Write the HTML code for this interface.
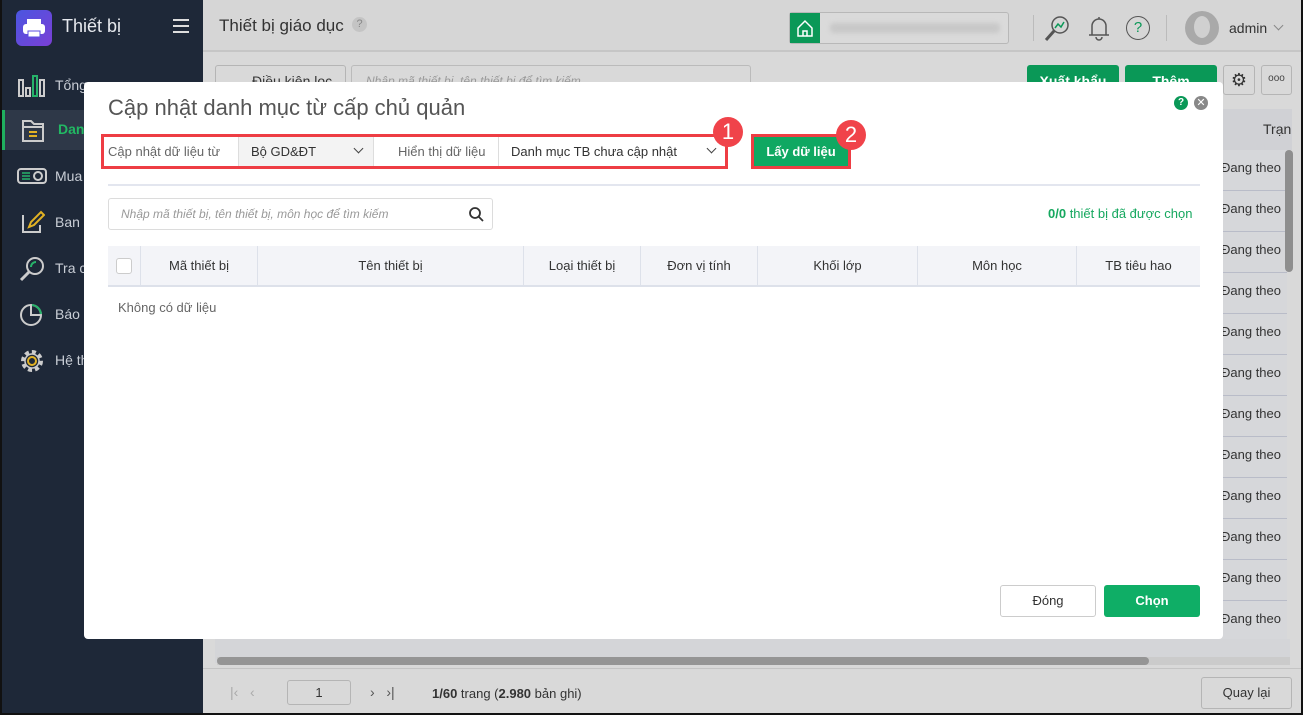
<!DOCTYPE html>
<html><head><meta charset="utf-8"><style>
*{box-sizing:border-box;margin:0;padding:0}
body{width:1303px;height:715px;position:relative;overflow:hidden;font-family:"Liberation Sans",sans-serif;background:#d9d9d9;color:#333;font-size:13px}
.abs{position:absolute}
#side{left:0;top:0;width:203px;height:715px;background:#1e2838;border-left:2px solid #111}
.nav{position:absolute;left:0;width:203px;height:40px;color:#c9ced6;font-size:14px}
.nav span{position:absolute;left:53px;top:11px}
.hdr{left:203px;top:0;width:1100px;height:52px;background:#d6d6d6;border-bottom:2px solid #c6c6c6}
.dang{position:absolute;left:1221px;font-size:13px;color:#333;width:68px;overflow:hidden;white-space:nowrap}
.rowl{position:absolute;left:1207px;width:80px;height:1px;background:#b9bcc8}
#modal{left:84px;top:82px;width:1139px;height:557px;background:#fff;border-radius:4px}
.th{position:absolute;top:0;height:40px;line-height:40px;text-align:center;font-size:13px;color:#333;border-right:1px solid #dde1ea}
.btn{position:absolute;border-radius:3px;text-align:center;font-size:13px}
.badge{position:absolute;width:30px;height:30px;border-radius:50%;background:#f0434a;color:#fff;font-size:22px;text-align:center;line-height:30px}
</style></head><body>
<div style="position:absolute;left:0;top:0;width:1303px;height:2px;background:#111"></div>
<div id="side" class="abs">
 <div class="abs" style="left:14px;top:10px;width:36px;height:36px;border-radius:6px;background:linear-gradient(135deg,#4a56e0,#7b3fd6)">
  <svg width="36" height="36" viewBox="0 0 36 36"><rect x="11" y="9" width="14" height="5" fill="#fff"/><rect x="7" y="14" width="22" height="10" rx="3" fill="#fff"/><rect x="12" y="21" width="12" height="6" fill="#fff" stroke="#5a4ee0"/></svg></div>
 <div class="abs" style="left:60px;top:16px;color:#e6e9ee;font-size:18px">Thiết bị</div>
 <div class="abs" style="left:171px;top:19px;width:16px;height:2px;background:#ddd;box-shadow:0 6px 0 #ddd,0 12px 0 #ddd"></div>
 <div class="nav" style="top:66px"><svg class="abs" style="left:15px;top:8px" width="28" height="24"><g fill="none" stroke="#ccc" stroke-width="2"><rect x="2" y="6" width="4" height="16"/><rect x="9" y="14" width="4" height="8"/><rect x="23" y="6" width="4" height="16"/></g><rect x="16" y="2" width="4" height="20" fill="none" stroke="#27b36a" stroke-width="2"/></svg><span>Tổng</span></div>
 <div class="nav" style="top:110px;background:#2e3848;border-left:3px solid #1fb05e"><svg class="abs" style="left:15px;top:8px" width="26" height="26"><path d="M3 3h8l3 3h9v17H3z M3 9h20" fill="none" stroke="#ccc" stroke-width="2"/><path d="M9 14h8M9 18h8" stroke="#e2b224" stroke-width="2"/></svg><span style="color:#22b863;font-weight:bold">Danh</span></div>
 <div class="nav" style="top:157px"><svg class="abs" style="left:15px;top:10px" width="30" height="20"><rect x="1" y="2" width="28" height="14" rx="3" fill="none" stroke="#ccc" stroke-width="2"/><circle cx="21" cy="9" r="4" fill="none" stroke="#ccc" stroke-width="2"/><path d="M5 6h8M5 9h8M5 12h8" stroke="#27b36a" stroke-width="1.5"/></svg><span>Mua</span></div>
 <div class="nav" style="top:203px"><svg class="abs" style="left:17px;top:6px" width="26" height="26"><path d="M4 6v17h17v-7" fill="none" stroke="#ccc" stroke-width="2"/><path d="M10 18l2-5 10-10 3 3-10 10z" fill="none" stroke="#e2b224" stroke-width="2"/></svg><span>Ban h</span></div>
 <div class="nav" style="top:249px"><svg class="abs" style="left:17px;top:6px" width="28" height="28"><circle cx="16" cy="11" r="8" fill="none" stroke="#ccc" stroke-width="2"/><path d="M10 17l-8 8" stroke="#ccc" stroke-width="3"/><path d="M12 12a5 5 0 0 1 5-5" fill="none" stroke="#27b36a" stroke-width="2"/></svg><span>Tra c</span></div>
 <div class="nav" style="top:295px"><svg class="abs" style="left:17px;top:6px" width="26" height="26"><circle cx="12" cy="14" r="10" fill="none" stroke="#ccc" stroke-width="2"/><path d="M12 4v10h10" fill="none" stroke="#ccc" stroke-width="2"/><path d="M13 4a10 10 0 0 1 9 9" fill="none" stroke="#27b36a" stroke-width="2"/></svg><span>Báo c</span></div>
 <div class="nav" style="top:341px"><svg class="abs" style="left:17px;top:6px" width="28" height="28"><circle cx="13" cy="14" r="9" fill="none" stroke="#ccc" stroke-width="4" stroke-dasharray="4 3"/><circle cx="13" cy="14" r="7" fill="none" stroke="#ccc" stroke-width="1.5"/><circle cx="13" cy="14" r="4" fill="none" stroke="#e2b224" stroke-width="2"/></svg><span>Hệ th</span></div>
</div>
<div class="abs hdr"></div>
<div class="abs" style="left:219px;top:16px;font-size:17px;color:#333">Thiết bị giáo dục</div>
<div class="abs" style="left:352px;top:17px;width:15px;height:15px;border-radius:50%;background:#c4c4c4;color:#888;font-size:11px;text-align:center;line-height:15px">?</div>
<div class="abs" style="left:789px;top:12px;width:220px;height:32px;border:1px solid #b8b8b8;border-radius:3px;background:#dadada"></div>
<div class="abs" style="left:790px;top:13px;width:30px;height:30px;background:#0a9857"><svg width="30" height="30"><path d="M8 15l7-7 7 7v8H8z M13 23v-5h4v5" fill="none" stroke="#fff" stroke-width="1.5"/></svg></div>
<div class="abs" style="left:830px;top:23px;width:170px;height:10px;background:#c8c8c8;border-radius:4px;filter:blur(2px)"></div>
<div class="abs" style="left:1033px;top:15px;width:1px;height:26px;background:#bbb"></div>
<svg class="abs" style="left:1043px;top:14px" width="30" height="30"><circle cx="17" cy="11" r="8" fill="none" stroke="#555" stroke-width="1.5"/><path d="M11 17l-8 9" stroke="#555" stroke-width="3"/><path d="M12 14l3-4 3 3 3-5" fill="none" stroke="#0a9857" stroke-width="1.5"/></svg>
<svg class="abs" style="left:1086px;top:13px" width="26" height="30"><path d="M13 4v2M6 22v-9a7 7 0 0 1 14 0v9h3H3z M10 24a3 3 0 0 0 6 0" fill="none" stroke="#555" stroke-width="1.5"/></svg>
<div class="abs" style="left:1126px;top:16px;width:24px;height:24px;border-radius:50%;border:1.5px solid #555;text-align:center;line-height:21px;color:#0a9857;font-size:15px">?</div>
<div class="abs" style="left:1166px;top:15px;width:1px;height:26px;background:#bbb"></div>
<div class="abs" style="left:1185px;top:11px;width:34px;height:34px;border-radius:50%;background:#a9a9a9;overflow:hidden"><div style="position:absolute;left:9px;top:5px;width:16px;height:22px;border-radius:50%;background:#d0d0d0"></div></div>
<div class="abs" style="left:1229px;top:20px;font-size:14px;color:#333">admin</div>
<div class="abs" style="left:1275px;top:22px;width:7px;height:7px;border-right:1px solid #888;border-bottom:1px solid #888;transform:rotate(45deg)"></div>
<!-- toolbar behind -->
<div class="abs" style="left:215px;top:65px;width:131px;height:30px;border:1px solid #b5b5b5;border-radius:3px;font-size:14px;padding:7px 0 0 36px;color:#333">Điều kiện lọc</div>
<div class="abs" style="left:351px;top:65px;width:400px;height:30px;border:1px solid #bbb;border-radius:3px;font-size:12px;font-style:italic;color:#999;padding:8px 0 0 14px">Nhập mã thiết bị, tên thiết bị để tìm kiếm</div>
<div class="abs" style="left:1027px;top:65px;width:92px;height:30px;background:#0a9857;border-radius:3px;color:#fff;font-weight:bold;font-size:14px;text-align:center;padding-top:8px">Xuất khẩu</div>
<div class="abs" style="left:1125px;top:65px;width:92px;height:30px;background:#0a9857;border-radius:3px;color:#fff;font-weight:bold;font-size:14px;text-align:center;padding-top:8px">Thêm</div>
<div class="abs" style="left:1223px;top:65px;width:32px;height:30px;border:1px solid #b5b5b5;border-radius:3px;text-align:center;line-height:28px;font-size:18px;color:#333">⚙</div>
<div class="abs" style="left:1261px;top:65px;width:31px;height:30px;border:1px solid #b5b5b5;border-radius:3px;text-align:center;line-height:26px;font-size:10px;color:#444">ooo</div>
<div class="abs" style="left:1207px;top:109px;width:85px;height:41px;background:#d0d1d5"></div>
<div class="abs" style="left:1263px;top:121px;font-size:14px">Trạn</div>
<div class="abs" style="left:1207px;top:150px;width:80px;height:495px;background:#d6d7da"></div>
<div class="dang" style="top:160px">Đang theo</div><div class="rowl" style="top:190px"></div>
<div class="dang" style="top:201px">Đang theo</div><div class="rowl" style="top:231px"></div>
<div class="dang" style="top:242px">Đang theo</div><div class="rowl" style="top:272px"></div>
<div class="dang" style="top:283px">Đang theo</div><div class="rowl" style="top:313px"></div>
<div class="dang" style="top:324px">Đang theo</div><div class="rowl" style="top:354px"></div>
<div class="dang" style="top:365px">Đang theo</div><div class="rowl" style="top:395px"></div>
<div class="dang" style="top:406px">Đang theo</div><div class="rowl" style="top:436px"></div>
<div class="dang" style="top:447px">Đang theo</div><div class="rowl" style="top:477px"></div>
<div class="dang" style="top:488px">Đang theo</div><div class="rowl" style="top:518px"></div>
<div class="dang" style="top:529px">Đang theo</div><div class="rowl" style="top:559px"></div>
<div class="dang" style="top:570px">Đang theo</div><div class="rowl" style="top:600px"></div>
<div class="dang" style="top:611px">Đang theo</div>
<div class="abs" style="left:1285px;top:150px;width:8px;height:122px;background:#8e8e8e;border-radius:4px"></div>
<div class="abs" style="left:215px;top:639px;width:1075px;height:24px;background:#d4d5d8"></div>
<div class="abs" style="left:217px;top:657px;width:1073px;height:8px;background:#cbcbcb"></div>
<div class="abs" style="left:217px;top:657px;width:932px;height:8px;background:#959595;border-radius:4px"></div>
<div class="abs" style="left:203px;top:668px;width:1100px;height:1px;background:#c4c4c4"></div>
<div class="abs" style="left:230px;top:684px;color:#aaa;font-size:14px">|‹ &nbsp; ‹</div>
<div class="abs" style="left:287px;top:680px;width:64px;height:25px;border:1px solid #b5b5b5;border-radius:3px;text-align:center;line-height:23px">1</div>
<div class="abs" style="left:370px;top:684px;color:#555;font-size:14px">› &nbsp; ›|</div>
<div class="abs" style="left:432px;top:686px"><b>1/60</b> trang (<b>2.980</b> bản ghi)</div>
<div class="abs" style="left:1201px;top:677px;width:91px;height:32px;border:1px solid #b5b5b5;border-radius:3px;text-align:center;line-height:30px">Quay lại</div>
<div class="abs" style="left:1301px;top:0;width:2px;height:715px;background:#111"></div>
<div class="abs" style="left:0;top:713px;width:1303px;height:2px;background:#111"></div>
<!-- modal -->
<div id="modal" class="abs">
 <div class="abs" style="left:24px;top:13px;font-size:22px;color:#555">Cập nhật danh mục từ cấp chủ quản</div>
 <div class="abs" style="left:1090px;top:14px;width:14px;height:14px;border-radius:50%;background:#0a9857;color:#fff;font-size:10px;font-weight:bold;text-align:center;line-height:14px">?</div>
 <div class="abs" style="left:1110px;top:14px;width:14px;height:14px;border-radius:50%;background:#888;color:#fff;font-size:11px;text-align:center;line-height:14px">✕</div>
 <div class="abs" style="left:17px;top:52px;width:627px;height:35px;border:3px solid #ee3d44"></div>
 <div class="abs" style="left:24px;top:62px;color:#666;font-size:13px">Cập nhật dữ liệu từ</div>
 <div class="abs" style="left:154px;top:55px;width:136px;height:29px;background:#f3f3f3;border-left:1px solid #ddd;border-right:1px solid #ddd"></div>
 <div class="abs" style="left:167px;top:62px;font-size:13px">Bộ GD&amp;ĐT</div>
 <div class="abs" style="left:271px;top:63px;width:7px;height:7px;border-right:1.5px solid #444;border-bottom:1.5px solid #444;transform:rotate(45deg)"></div>
 <div class="abs" style="left:314px;top:62px;color:#666">Hiển thị dữ liệu</div>
 <div class="abs" style="left:414px;top:55px;width:1px;height:29px;background:#ddd"></div>
 <div class="abs" style="left:427px;top:62px">Danh mục TB chưa cập nhật</div>
 <div class="abs" style="left:624px;top:63px;width:7px;height:7px;border-right:1.5px solid #444;border-bottom:1.5px solid #444;transform:rotate(45deg)"></div>
 <div class="badge" style="left:629px;top:35px">1</div>
 <div class="abs" style="left:667px;top:52px;width:100px;height:35px;border:3px solid #ee3d44;background:#0fa862;color:#fff;font-weight:bold;text-align:center;line-height:29px">Lấy dữ liệu</div>
 <div class="badge" style="left:752px;top:38px">2</div>
 <div class="abs" style="left:24px;top:102px;width:1092px;height:2px;background:#e3e6ef"></div>
 <div class="abs" style="left:24px;top:116px;width:385px;height:32px;border:1px solid #dcdcdc;border-radius:3px"></div>
 <div class="abs" style="left:37px;top:125px;font-style:italic;color:#999;font-size:12px">Nhập mã thiết bị, tên thiết bị, môn học để tìm kiếm</div>
 <svg class="abs" style="left:384px;top:124px" width="16" height="16"><circle cx="7" cy="7" r="5" fill="none" stroke="#333" stroke-width="1.8"/><path d="M11 11l4 4" stroke="#333" stroke-width="1.8"/></svg>
 <div class="abs" style="left:964px;top:124px;color:#16a85f;font-size:13px"><b>0/0</b> thiết bị đã được chọn</div>
 <div class="abs" style="left:24px;top:164px;width:1092px;height:41px;background:#f3f4f8;border-bottom:2px solid #dde1ea">
  <div class="th" style="left:0;width:33px"><div style="position:absolute;left:8px;top:12px;width:16px;height:16px;border:1px solid #ccc;border-radius:3px;background:#fff"></div></div>
  <div class="th" style="left:33px;width:117px">Mã thiết bị</div>
  <div class="th" style="left:150px;width:266px">Tên thiết bị</div>
  <div class="th" style="left:416px;width:117px">Loại thiết bị</div>
  <div class="th" style="left:533px;width:117px">Đơn vị tính</div>
  <div class="th" style="left:650px;width:160px">Khối lớp</div>
  <div class="th" style="left:810px;width:159px">Môn học</div>
  <div class="th" style="left:969px;width:123px;border-right:none">TB tiêu hao</div>
 </div>
 <div class="abs" style="left:34px;top:218px;color:#666">Không có dữ liệu</div>
 <div class="btn" style="left:916px;top:503px;width:96px;height:32px;border:1px solid #ccc;line-height:30px">Đóng</div>
 <div class="btn" style="left:1020px;top:503px;width:96px;height:32px;background:#0fae66;color:#fff;font-weight:bold;line-height:32px">Chọn</div>
</div>
</body></html>
